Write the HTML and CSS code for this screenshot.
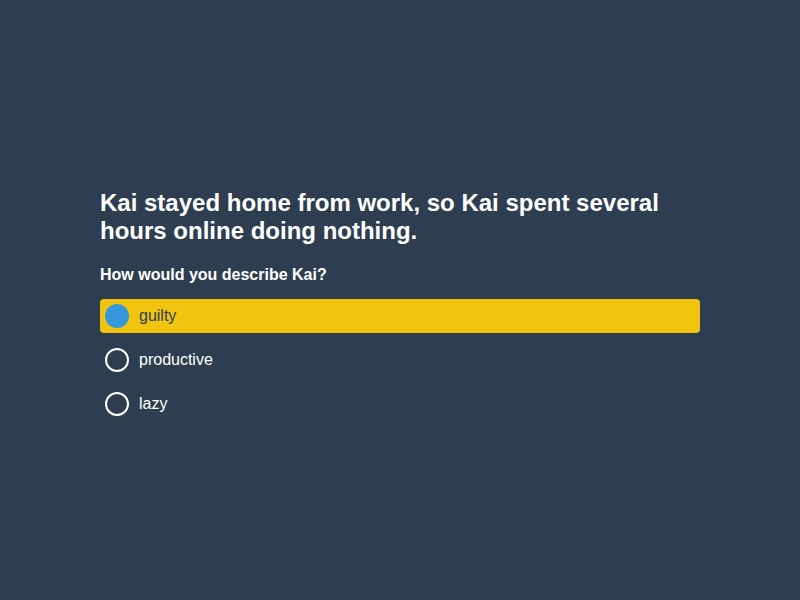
FILE: index.html
```html
<!DOCTYPE html>
<html>
<head>
<meta charset="utf-8">
<link rel="stylesheet" href="styles.css">
</head>
<body>
<main class="page">
  <section class="quiz">
    <h1 class="title">Kai stayed home from work, so Kai spent several hours online doing nothing.</h1>
    <h2 class="question">How would you describe Kai?</h2>
    <div class="options">
      <div class="option selected"><span class="radio"></span><span class="label">guilty</span></div>
      <div class="option"><span class="radio"></span><span class="label">productive</span></div>
      <div class="option"><span class="radio"></span><span class="label">lazy</span></div>
    </div>
  </section>
</main>
</body>
</html>
```
FILE: styles.css
```css
html, body {
  margin: 0;
  padding: 0;
  height: 100%;
  background: #2e3e50;
}
body {
  font-family: "Liberation Sans", Arial, sans-serif;
  color: #ffffff;
}
.page {
  box-sizing: border-box;
  height: 100%;
  padding-top: 9px;
  display: flex;
  align-items: center;
  justify-content: center;
}
.quiz {
  width: 600px;
}
.title {
  margin: 0 0 20px 0;
  font-size: 24px;
  line-height: 28px;
  font-weight: bold;
}
.question {
  margin: 0 0 14px 0;
  font-size: 16px;
  line-height: 20px;
  font-weight: bold;
}
.options {
  display: flex;
  flex-direction: column;
  gap: 10px;
}
.option {
  height: 34px;
  display: flex;
  align-items: center;
  padding-left: 5px;
  border-radius: 4px;
  font-size: 16px;
}
.option.selected {
  background: #f1c40f;
  color: #2c3e50;
}
.radio {
  box-sizing: border-box;
  width: 24px;
  height: 24px;
  border-radius: 50%;
  border: 2px solid #ffffff;
  margin-right: 10px;
}
.selected .radio {
  background: #3498db;
  border-color: #3498db;
}
```
